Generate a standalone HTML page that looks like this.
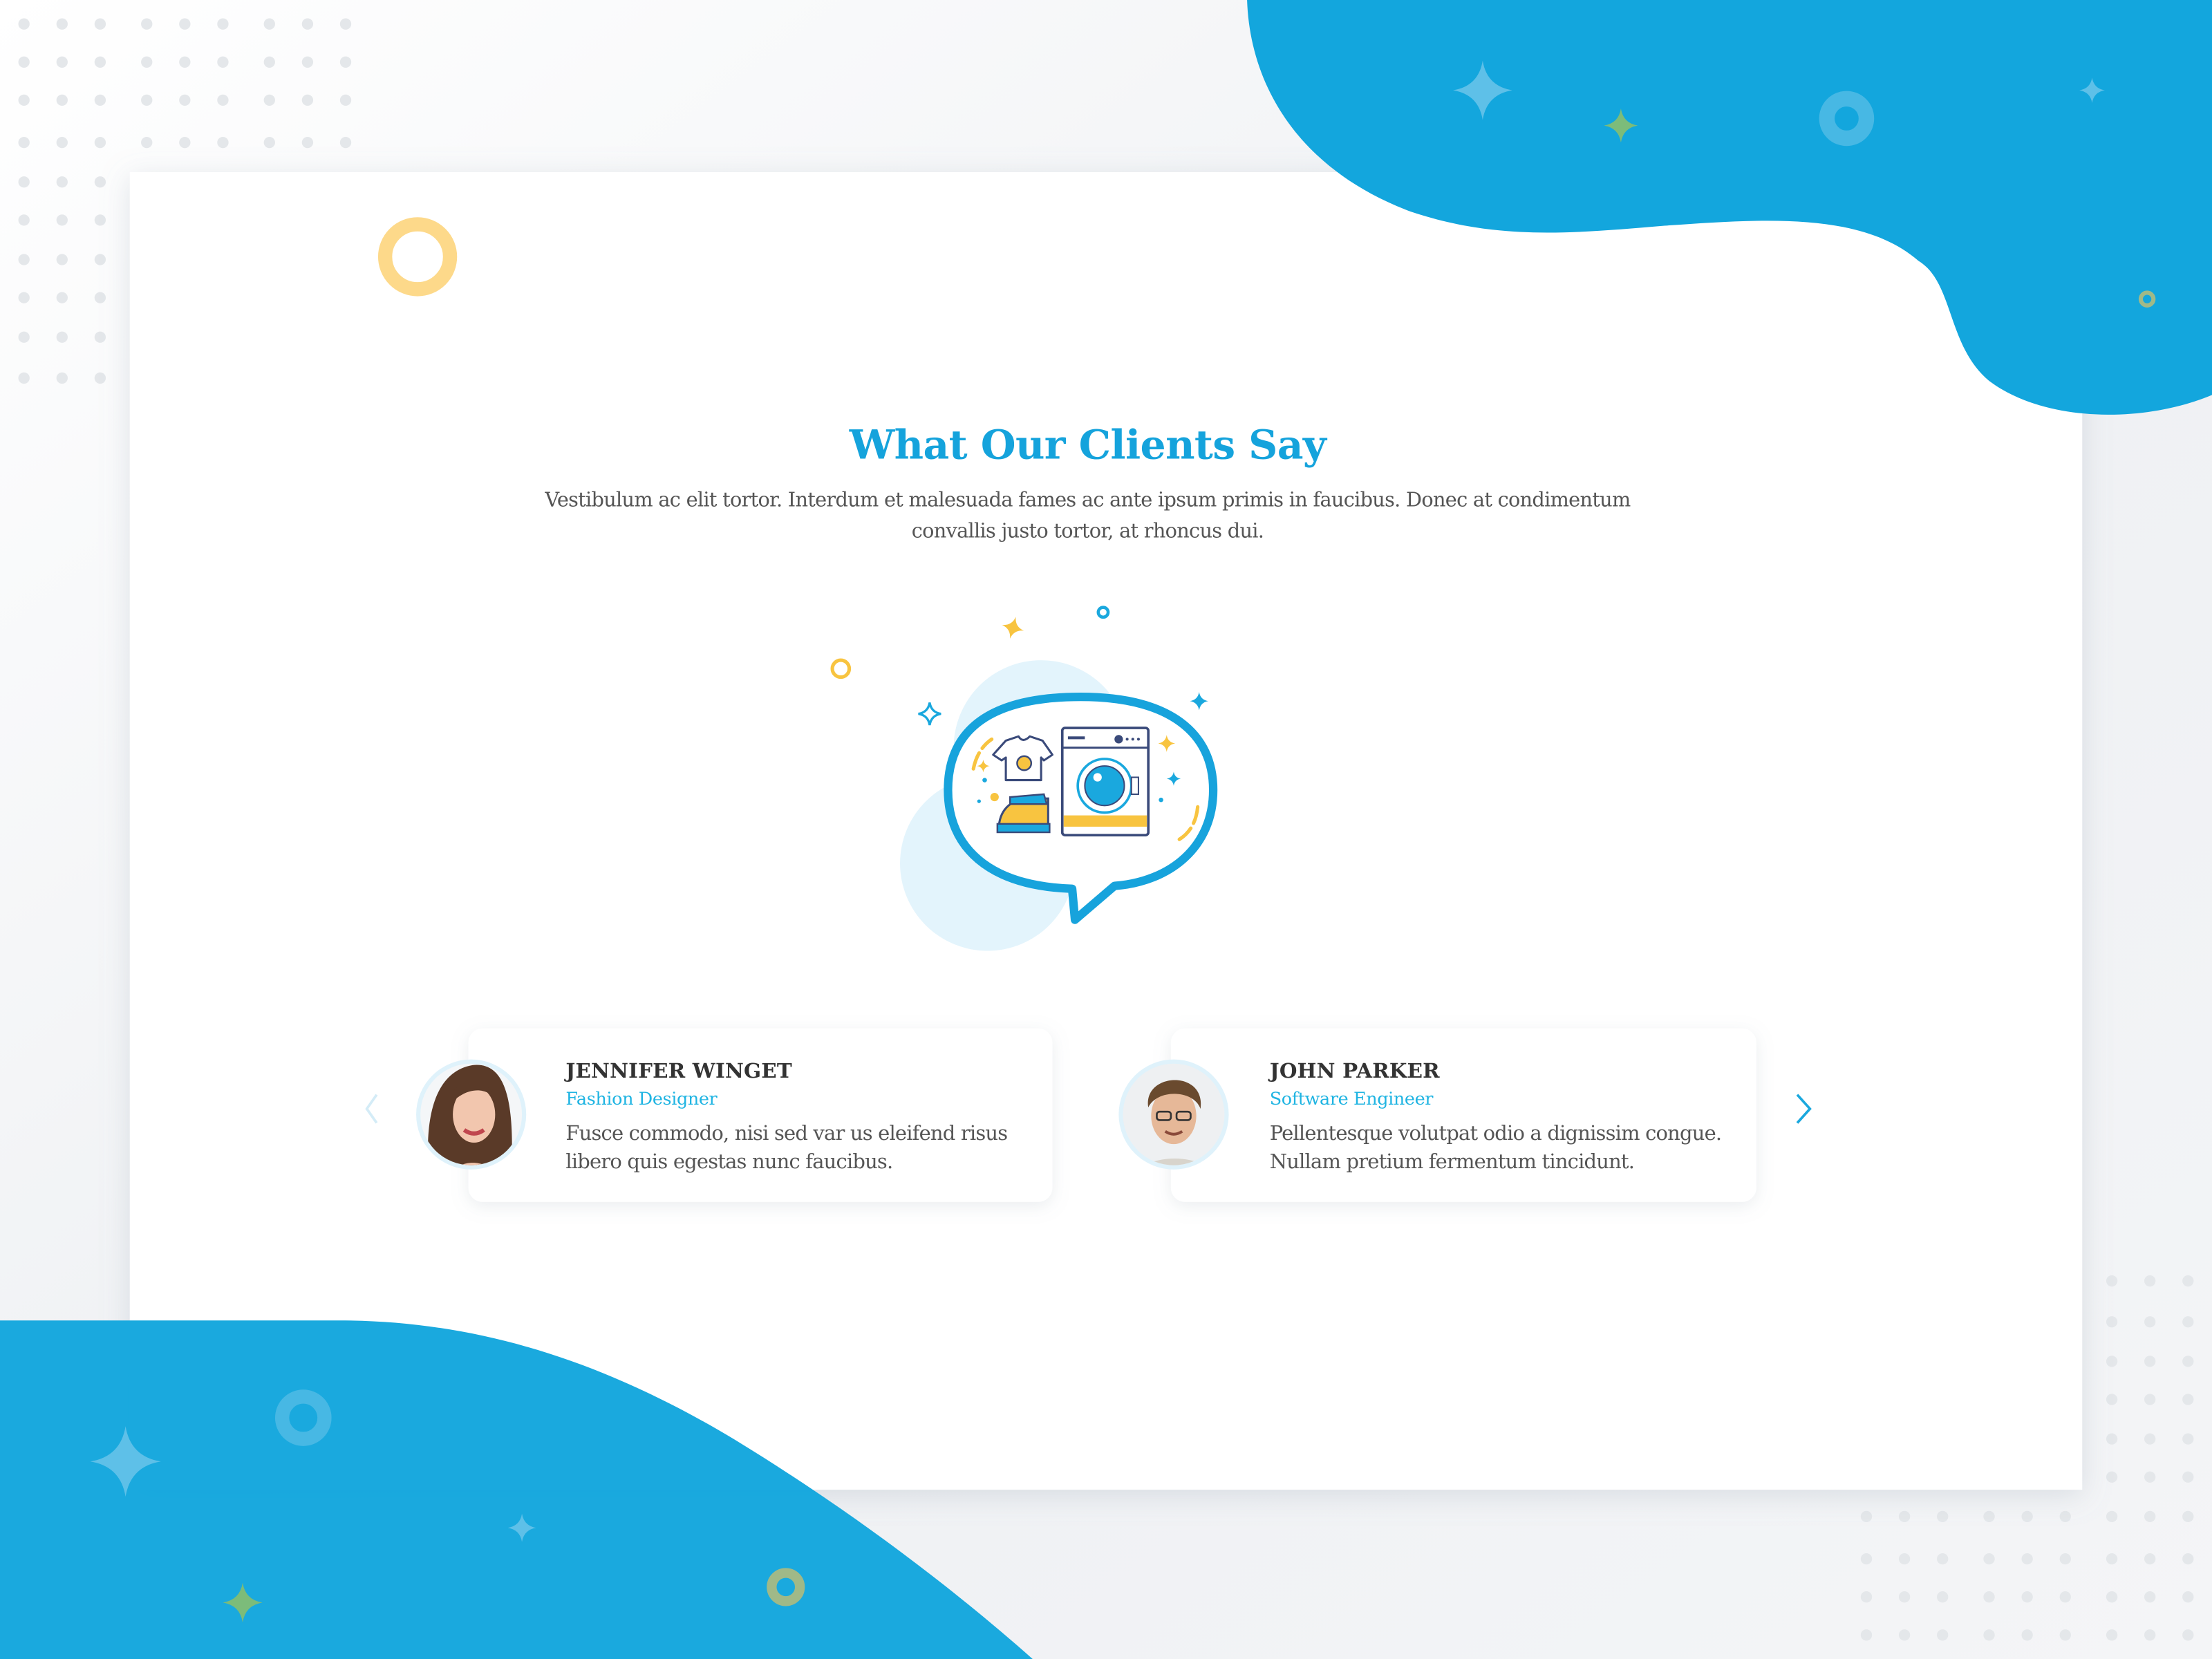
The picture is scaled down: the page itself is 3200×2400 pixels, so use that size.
<!DOCTYPE html>
<html><head><meta charset="utf-8"><style>
html,body{margin:0;padding:0;width:3200px;height:2400px;overflow:hidden;background:#f3f4f6}
svg{display:block}
</style></head><body>
<svg width="3200" height="2400" viewBox="0 0 1568 1176" xmlns="http://www.w3.org/2000/svg">
<defs>
<linearGradient id="bg" x1="0" y1="0" x2="1" y2="1">
<stop offset="0" stop-color="#ffffff"/><stop offset="0.5" stop-color="#eef0f3"/><stop offset="1" stop-color="#f4f5f7"/>
</linearGradient>
<filter id="sh" x="-10%" y="-10%" width="120%" height="120%"><feDropShadow dx="0" dy="4" stdDeviation="10" flood-color="#8a99a8" flood-opacity="0.25"/></filter>
<filter id="sh2" x="-10%" y="-20%" width="120%" height="140%"><feDropShadow dx="0" dy="3" stdDeviation="6" flood-color="#8a99a8" flood-opacity="0.18"/></filter>
<path id="st" d="M0,-1 Q0.14,-0.14 1,0 Q0.14,0.14 0,1 Q-0.14,0.14 -1,0 Q-0.14,-0.14 0,-1Z"/>
<clipPath id="c1"><circle cx="334" cy="790" r="36"/></clipPath>
<clipPath id="c2"><circle cx="832" cy="790" r="36"/></clipPath>
</defs>
<rect width="1568" height="1176" fill="url(#bg)"/>
<g fill="#e4e7ea">
<g id="dg">
<circle cx="17" cy="17" r="4"/><circle cx="44" cy="17" r="4"/><circle cx="71" cy="17" r="4"/><circle cx="104" cy="17" r="4"/><circle cx="131" cy="17" r="4"/><circle cx="158" cy="17" r="4"/><circle cx="191" cy="17" r="4"/><circle cx="218" cy="17" r="4"/><circle cx="245" cy="17" r="4"/>
<circle cx="17" cy="44" r="4"/><circle cx="44" cy="44" r="4"/><circle cx="71" cy="44" r="4"/><circle cx="104" cy="44" r="4"/><circle cx="131" cy="44" r="4"/><circle cx="158" cy="44" r="4"/><circle cx="191" cy="44" r="4"/><circle cx="218" cy="44" r="4"/><circle cx="245" cy="44" r="4"/>
<circle cx="17" cy="71" r="4"/><circle cx="44" cy="71" r="4"/><circle cx="71" cy="71" r="4"/><circle cx="104" cy="71" r="4"/><circle cx="131" cy="71" r="4"/><circle cx="158" cy="71" r="4"/><circle cx="191" cy="71" r="4"/><circle cx="218" cy="71" r="4"/><circle cx="245" cy="71" r="4"/>
<circle cx="17" cy="101" r="4"/><circle cx="44" cy="101" r="4"/><circle cx="71" cy="101" r="4"/><circle cx="104" cy="101" r="4"/><circle cx="131" cy="101" r="4"/><circle cx="158" cy="101" r="4"/><circle cx="191" cy="101" r="4"/><circle cx="218" cy="101" r="4"/><circle cx="245" cy="101" r="4"/>
<circle cx="17" cy="129" r="4"/><circle cx="44" cy="129" r="4"/><circle cx="71" cy="129" r="4"/>
<circle cx="17" cy="156" r="4"/><circle cx="44" cy="156" r="4"/><circle cx="71" cy="156" r="4"/>
<circle cx="17" cy="184" r="4"/><circle cx="44" cy="184" r="4"/><circle cx="71" cy="184" r="4"/>
<circle cx="17" cy="211" r="4"/><circle cx="44" cy="211" r="4"/><circle cx="71" cy="211" r="4"/>
<circle cx="17" cy="239" r="4"/><circle cx="44" cy="239" r="4"/><circle cx="71" cy="239" r="4"/>
<circle cx="17" cy="268" r="4"/><circle cx="44" cy="268" r="4"/><circle cx="71" cy="268" r="4"/>
</g>
<g transform="translate(1568,1176) scale(-1,-1)"><use href="#dg"/></g>
</g>
<rect x="92" y="122" width="1384" height="934" fill="#ffffff" filter="url(#sh)"/>
<path d="M884,0 L1568,0 L1568,280 C1520,300 1450,300 1410,270 C1380,245 1385,200 1360,185 C1320,150 1250,155 1180,160 C1110,166 1060,170 1000,150 C920,120 886,60 884,0Z" fill="#13a6dd"/>
<g fill="#5ec0e8"><use href="#st" transform="translate(1051,64) scale(21,21)"/><use href="#st" transform="translate(1483,64) scale(9,9)"/></g>
<use href="#st" transform="translate(1149,89) scale(12,12)" fill="#7cbc7a"/>
<circle cx="1309" cy="84" r="14" fill="none" stroke="#47b8e4" stroke-width="11"/>
<circle cx="1522" cy="212" r="4.5" fill="none" stroke="#a0b988" stroke-width="3"/>
<path d="M0,936 L240,936 C330,936 420,960 520,1020 C610,1075 680,1130 732,1176 L0,1176Z" fill="#13a6dd" opacity="0.97"/>
<use href="#st" transform="translate(89,1036) scale(25,25)" fill="#5ec0e8"/>
<use href="#st" transform="translate(370,1083) scale(10,10)" fill="#5ec0e8"/>
<use href="#st" transform="translate(172,1136) scale(14,14)" fill="#7cbc7a"/>
<circle cx="215" cy="1005" r="15" fill="none" stroke="#47b8e4" stroke-width="10"/>
<circle cx="557" cy="1125" r="10" fill="none" stroke="#a0b988" stroke-width="7"/>
<circle cx="296" cy="182" r="23" fill="none" stroke="#fdd98a" stroke-width="10"/>
<text x="771" y="325" text-anchor="middle" font-family="'DejaVu Serif','Liberation Serif',serif" font-weight="bold" font-size="28.6" fill="#15a3dc" letter-spacing="-0.3">What Our Clients Say</text>
<g font-family="'DejaVu Serif','Liberation Serif',serif" font-size="14.1" fill="#555" text-anchor="middle" letter-spacing="-0.35">
<text x="771" y="359">Vestibulum ac elit tortor. Interdum et malesuada fames ac ante ipsum primis in faucibus. Donec at condimentum</text>
<text x="771" y="381">convallis justo tortor, at rhoncus dui.</text>
</g>
<circle cx="738" cy="530" r="62" fill="#e3f4fc"/>
<ellipse cx="700" cy="612" rx="62" ry="62" fill="#e3f4fc"/>
<circle cx="596" cy="474" r="6" fill="none" stroke="#f8c440" stroke-width="2.5"/>
<circle cx="782" cy="434" r="3.5" fill="none" stroke="#1aa8de" stroke-width="2.2"/>
<use href="#st" transform="translate(718,445) scale(8,8) rotate(15)" fill="#f8c440"/>
<use href="#st" transform="translate(659,506) scale(8,8)" fill="#fff" stroke="#1aa8de" stroke-width="0.2"/>
<use href="#st" transform="translate(850,497) scale(6.5,6.5)" fill="#1aa8de"/>
<path d="M766,494 C830,494 860,520 860,560 C860,600 830,625 790,628 L762,652 L760,630 C700,628 672,600 672,560 C672,515 705,494 766,494Z" fill="#fff" stroke="#17a3dc" stroke-width="6" stroke-linejoin="round"/>
<path d="M690,545 C692,535 697,528 703,524" fill="none" stroke="#f8c440" stroke-width="2.5" stroke-linecap="round" stroke-dasharray="12 4"/>
<path d="M849,572 C848,582 844,590 836,595" fill="none" stroke="#f8c440" stroke-width="2.5" stroke-linecap="round" stroke-dasharray="12 4"/>
<path d="M713,525 L722,522 Q725,527 730,522 L739,525 L746,535 L740,539 L738,537 L738,553 L713,553 L713,537 L710,539 L704,535Z" fill="#fff" stroke="#3a4a7a" stroke-width="1.5" stroke-linejoin="round"/>
<circle cx="726" cy="541" r="5" fill="#f8c440" stroke="#3a4a7a" stroke-width="1.2"/>
<path d="M708,588 C708,575 716,566 730,566 L743,566 L743,588Z" fill="#f8c440" stroke="#3a4a7a" stroke-width="1.5"/>
<path d="M707,584 L744,584 L744,590 L707,590Z" fill="#1aa8de" stroke="#3a4a7a" stroke-width="1.2"/>
<path d="M716,565 L740,563 L742,570 L716,570Z" fill="#1aa8de" stroke="#3a4a7a" stroke-width="1.2"/>
<rect x="753" y="516" width="61" height="76" rx="2" fill="#fff" stroke="#3a4a7a" stroke-width="1.8"/>
<line x1="753" y1="530" x2="814" y2="530" stroke="#3a4a7a" stroke-width="1.5"/>
<rect x="754" y="578" width="59" height="8" fill="#f8c440"/>
<circle cx="783" cy="557" r="19" fill="#fff" stroke="#1aa8de" stroke-width="1.8"/>
<circle cx="783" cy="557" r="14" fill="#1aa8de" stroke="#3a4a7a" stroke-width="1"/>
<circle cx="778" cy="551" r="3" fill="#fff"/>
<rect x="802" y="551" width="5" height="12" fill="#fff" stroke="#3a4a7a" stroke-width="1"/>
<circle cx="793" cy="524" r="3" fill="#3a4a7a"/>
<g fill="#3a4a7a"><rect x="757" y="522" width="12" height="2"/><circle cx="799" cy="524" r="1"/><circle cx="803" cy="524" r="1"/><circle cx="807" cy="524" r="1"/></g>
<use href="#st" transform="translate(827,527) scale(6,6)" fill="#f8c440"/>
<use href="#st" transform="translate(832,552) scale(5,5)" fill="#1aa8de"/>
<use href="#st" transform="translate(697,543) scale(4.5,4.5)" fill="#f8c440"/>
<circle cx="705" cy="565" r="3" fill="#f8c440"/><circle cx="698" cy="553" r="1.6" fill="#1aa8de"/><circle cx="694" cy="568" r="1.3" fill="#1aa8de"/><circle cx="823" cy="567" r="1.6" fill="#1aa8de"/>
<rect x="332" y="729" width="414" height="123" rx="10" fill="#fff" filter="url(#sh2)"/>
<rect x="830" y="729" width="415" height="123" rx="10" fill="#fff" filter="url(#sh2)"/>
<circle cx="334" cy="790" r="39" fill="#dff2fb"/>
<g clip-path="url(#c1)"><rect x="290" y="750" width="90" height="90" fill="#f4f6f8"/>
<path d="M305,840 C300,800 305,760 335,755 C362,752 365,790 362,840Z" fill="#5a3a28"/>
<ellipse cx="336" cy="790" rx="15" ry="20" fill="#f2c6ae"/>
<path d="M318,784 C318,764 345,760 352,780 C345,770 330,770 318,784Z" fill="#5a3a28"/>
<path d="M329,801 Q336,806 343,801" stroke="#c0464e" stroke-width="3" fill="none"/>
<path d="M316,840 C318,820 350,818 356,840Z" fill="#f2c6ae"/></g>
<circle cx="832" cy="790" r="39" fill="#dff2fb"/>
<g clip-path="url(#c2)"><rect x="790" y="750" width="90" height="90" fill="#eef0f2"/>
<path d="M800,840 C805,815 860,815 866,840Z" fill="#d8d4cc"/>
<ellipse cx="832" cy="791" rx="16" ry="20" fill="#e6b898"/>
<path d="M814,785 C810,760 855,758 851,786 C846,772 820,772 814,785Z" fill="#6a4a2e"/>
<rect x="820" y="788" width="10" height="6" rx="2" fill="none" stroke="#333" stroke-width="1.3"/><rect x="834" y="788" width="10" height="6" rx="2" fill="none" stroke="#333" stroke-width="1.3"/>
<path d="M826,802 Q832,806 838,802" stroke="#8a4a3a" stroke-width="2" fill="none"/></g>
<path d="M267,776 L260,786 L267,796" fill="none" stroke="#d4ecf7" stroke-width="1.8"/>
<path d="M1274,776 L1283,786 L1274,796" fill="none" stroke="#1aa8de" stroke-width="1.8"/>
<g font-family="'DejaVu Serif','Liberation Serif',serif">
<text x="401" y="764" font-weight="bold" font-size="14.4" fill="#333" letter-spacing="0.1">JENNIFER WINGET</text>
<text x="401" y="783" font-size="12.5" fill="#1fb4e2" letter-spacing="-0.2">Fashion Designer</text>
<text x="401" y="808" font-size="14.2" fill="#555" letter-spacing="-0.4">Fusce commodo, nisi sed var us eleifend risus</text>
<text x="401" y="828" font-size="14.2" fill="#555" letter-spacing="-0.4">libero quis egestas nunc faucibus.</text>
<text x="900" y="764" font-weight="bold" font-size="14.4" fill="#333" letter-spacing="0.1">JOHN PARKER</text>
<text x="900" y="783" font-size="12.5" fill="#1fb4e2" letter-spacing="-0.2">Software Engineer</text>
<text x="900" y="808" font-size="14.2" fill="#555" letter-spacing="-0.4">Pellentesque volutpat odio a dignissim congue.</text>
<text x="900" y="828" font-size="14.2" fill="#555" letter-spacing="-0.4">Nullam pretium fermentum tincidunt.</text>
</g>
</svg>
</body></html>
